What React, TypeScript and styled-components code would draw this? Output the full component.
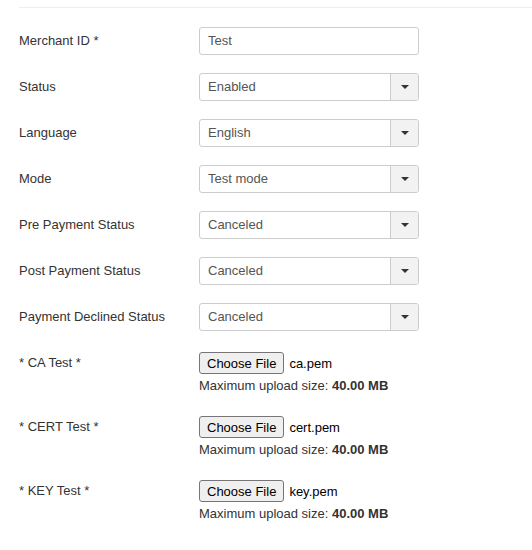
import styled, { createGlobalStyle } from 'styled-components';

const GlobalStyle = createGlobalStyle`
  html, body {
    margin: 0;
    padding: 0;
    background: #fff;
  }
  body {
    font-family: 'Liberation Sans', Arial, sans-serif;
    font-size: 13px;
    color: #333;
  }
`;

const Form = styled.div`
  margin: 7px 0 0 19px;
  padding-top: 19px;
  border-top: 1px solid #eee;
  display: flex;
  flex-direction: column;
  gap: 18px;
`;

const Row = styled.div<{ $file?: boolean }>`
  display: flex;
  align-items: flex-start;
  margin-top: ${(p) => (p.$file ? '3px' : '0')};
`;

const Label = styled.div<{ $file?: boolean }>`
  width: 180px;
  flex-shrink: 0;
  line-height: ${(p) => (p.$file ? '22px' : '28px')};
  color: #333;
`;

const TextInput = styled.div`
  box-sizing: border-box;
  width: 220px;
  height: 28px;
  padding: 0 8px;
  line-height: 26px;
  border: 1px solid #ccc;
  border-radius: 3px;
  color: #555;
  background: #fff;
`;

const SelectGroup = styled.div`
  box-sizing: border-box;
  width: 220px;
  height: 28px;
  display: flex;
  border: 1px solid #ccc;
  border-radius: 3px;
  overflow: hidden;
  background: #fff;
`;

const SelectValue = styled.div`
  flex: 1;
  padding: 0 8px;
  line-height: 26px;
  color: #555;
`;

const SelectButton = styled.div`
  width: 27px;
  border-left: 1px solid #ccc;
  background: #f2f2f2;
  display: flex;
  align-items: center;
  justify-content: center;
`;

const Caret = styled.span`
  width: 0;
  height: 0;
  border-left: 4px solid transparent;
  border-right: 4px solid transparent;
  border-top: 4px solid #333;
`;

const FileCol = styled.div`
  display: flex;
  flex-direction: column;
`;

const FileLine = styled.div`
  display: flex;
  align-items: center;
  gap: 5px;
  height: 22px;
  font-family: Arial, 'Liberation Sans', sans-serif;
`;

const ChooseButton = styled.button`
  box-sizing: border-box;
  height: 22px;
  padding: 0 7px;
  font-family: inherit;
  font-size: 13px;
  color: #000;
  background: #efefef;
  border: 1px solid #767676;
  border-radius: 3px;
`;

const FileName = styled.span`
  color: #000;
`;

const Note = styled.div`
  margin-top: 3px;
  line-height: 18px;
  color: #333;

  & b {
    font-weight: bold;
  }
`;

const selects = [
  ['Status', 'Enabled'],
  ['Language', 'English'],
  ['Mode', 'Test mode'],
  ['Pre Payment Status', 'Canceled'],
  ['Post Payment Status', 'Canceled'],
  ['Payment Declined Status', 'Canceled'],
];

const files = [
  ['* CA Test *', 'ca.pem'],
  ['* CERT Test *', 'cert.pem'],
  ['* KEY Test *', 'key.pem'],
];

export default function App(): JSX.Element {
  return (
    <>
      <GlobalStyle />
      <Form>
        <Row>
          <Label>Merchant ID *</Label>
          <TextInput>Test</TextInput>
        </Row>
        {selects.map(([label, value]) => (
          <Row key={label}>
            <Label>{label}</Label>
            <SelectGroup>
              <SelectValue>{value}</SelectValue>
              <SelectButton>
                <Caret />
              </SelectButton>
            </SelectGroup>
          </Row>
        ))}
        {files.map(([label, name]) => (
          <Row $file key={label}>
            <Label $file>{label}</Label>
            <FileCol>
              <FileLine>
                <ChooseButton>Choose File</ChooseButton>
                <FileName>{name}</FileName>
              </FileLine>
              <Note>
                Maximum upload size: <b>40.00 MB</b>
              </Note>
            </FileCol>
          </Row>
        ))}
      </Form>
    </>
  );
}
